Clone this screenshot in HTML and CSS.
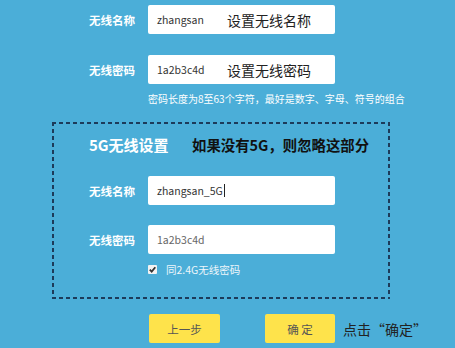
FILE: index.html
```html
<!DOCTYPE html>
<html lang="zh-CN">
<head>
  <meta charset="UTF-8">
  <title>无线设置</title>
  <link rel="stylesheet" href="styles.css">
</head>
<body>
  <div class="page">
    <div class="row">
      <span class="label">无线名称</span>
      <div class="field"><span class="value">zhangsan</span><span class="note">设置无线名称</span></div>
    </div>
    <div class="row row-last">
      <span class="label">无线密码</span>
      <div class="field"><span class="value">1a2b3c4d</span><span class="note">设置无线密码</span></div>
    </div>
    <p class="hint">密码长度为8至63个字符，最好是数字、字母、符号的组合</p>

    <div class="box">
      <div class="box-title">
        <span class="title">5G无线设置</span>
        <span class="skip">如果没有5G，则忽略这部分</span>
      </div>
      <div class="row row-inner">
        <span class="label">无线名称</span>
        <div class="field"><span class="value">zhangsan_5G</span><span class="caret"></span></div>
      </div>
      <div class="row row-inner row-last">
        <span class="label">无线密码</span>
        <div class="field"><span class="value muted">1a2b3c4d</span></div>
      </div>
      <div class="check-row">
        <span class="check">
          <svg width="9" height="9" viewBox="0 0 9 9"><path d="M1.8 4.6 L3.7 6.6 L7.3 2.2" fill="none" stroke="#333" stroke-width="1.8"/></svg>
        </span>
        <span class="check-text">同2.4G无线密码</span>
      </div>
    </div>

    <div class="actions">
      <button class="btn">上一步</button>
      <button class="btn btn-ok">确 定</button>
      <span class="click-note">点击“确定”</span>
    </div>
  </div>
</body>
</html>
```

FILE: styles.css
```css
body {
  margin: 0;
  background-color: #4baed8;
  font-family: "Noto Sans CJK SC", "Noto Sans", sans-serif;
}

.page {
  padding-top: 5px;
}

.row {
  display: grid;
  grid-template-columns: 135px 187px;
  column-gap: 13px;
  align-items: center;
  margin-bottom: 21px;
}

.row-inner {
  grid-template-columns: 81px 187px;
  margin-bottom: 20px;
}

.row-last {
  margin-bottom: 0;
}

.label {
  text-align: right;
  color: #fff;
  font-size: 11.5px;
  font-weight: bold;
  white-space: nowrap;
}

.field {
  display: flex;
  align-items: center;
  height: 29px;
  background: #fff;
  border-radius: 2px;
  padding-left: 9px;
}

.value {
  font-size: 10.5px;
  color: #333;
  min-width: 70px;
}

.value.muted {
  color: #666;
}

.row-inner .value {
  min-width: 0;
}

.caret {
  width: 1px;
  height: 13px;
  background: #222;
  margin-left: 1px;
}

.note {
  font-size: 14px;
  color: #222;
}

.hint {
  margin: 8px 0 0 148px;
  font-size: 10px;
  line-height: 14px;
  color: #fff;
}

.box {
  margin: 16px 0 0 52px;
  width: 338px;
  box-sizing: border-box;
  padding: 12px 0 22px 2px;
  background:
    repeating-linear-gradient(90deg, #1d3b5a 0 4px, transparent 4px 7px) top left / 100% 2px no-repeat,
    repeating-linear-gradient(90deg, #1d3b5a 0 4px, transparent 4px 7px) bottom left / 100% 2px no-repeat,
    repeating-linear-gradient(180deg, #1d3b5a 0 4px, transparent 4px 7px) top left / 2px 100% no-repeat,
    repeating-linear-gradient(180deg, #1d3b5a 0 4px, transparent 4px 7px) top right / 2px 100% no-repeat;
}

.box-title {
  display: flex;
  align-items: center;
  height: 20px;
  padding-left: 35px;
  margin-bottom: 22px;
  font-weight: bold;
}

.title {
  color: #fff;
  font-size: 15px;
  width: 103px;
}

.skip {
  color: #111;
  font-size: 14.4px;
}

.row-inner:first-of-type {
  margin-bottom: 20px;
}

.check-row {
  display: flex;
  align-items: center;
  height: 16px;
  margin: 7px 0 0 94px;
}

.check {
  display: flex;
  width: 9px;
  height: 9px;
  background: #f2f2f2;
  border-radius: 1px;
  margin-right: 9px;
}

.check-text {
  font-size: 10.5px;
  color: #eef6fb;
}

.actions {
  display: flex;
  align-items: center;
  margin: 15px 0 0 149px;
}

.btn {
  width: 71px;
  height: 29px;
  border: none;
  border-radius: 2px;
  background: #fee34b;
  color: #555;
  font-family: inherit;
  font-size: 11.5px;
  padding: 0;
}

.btn-ok {
  margin-left: 45px;
  width: 70px;
}

.click-note {
  margin-left: 8px;
  font-size: 14px;
  color: #222;
}
```
